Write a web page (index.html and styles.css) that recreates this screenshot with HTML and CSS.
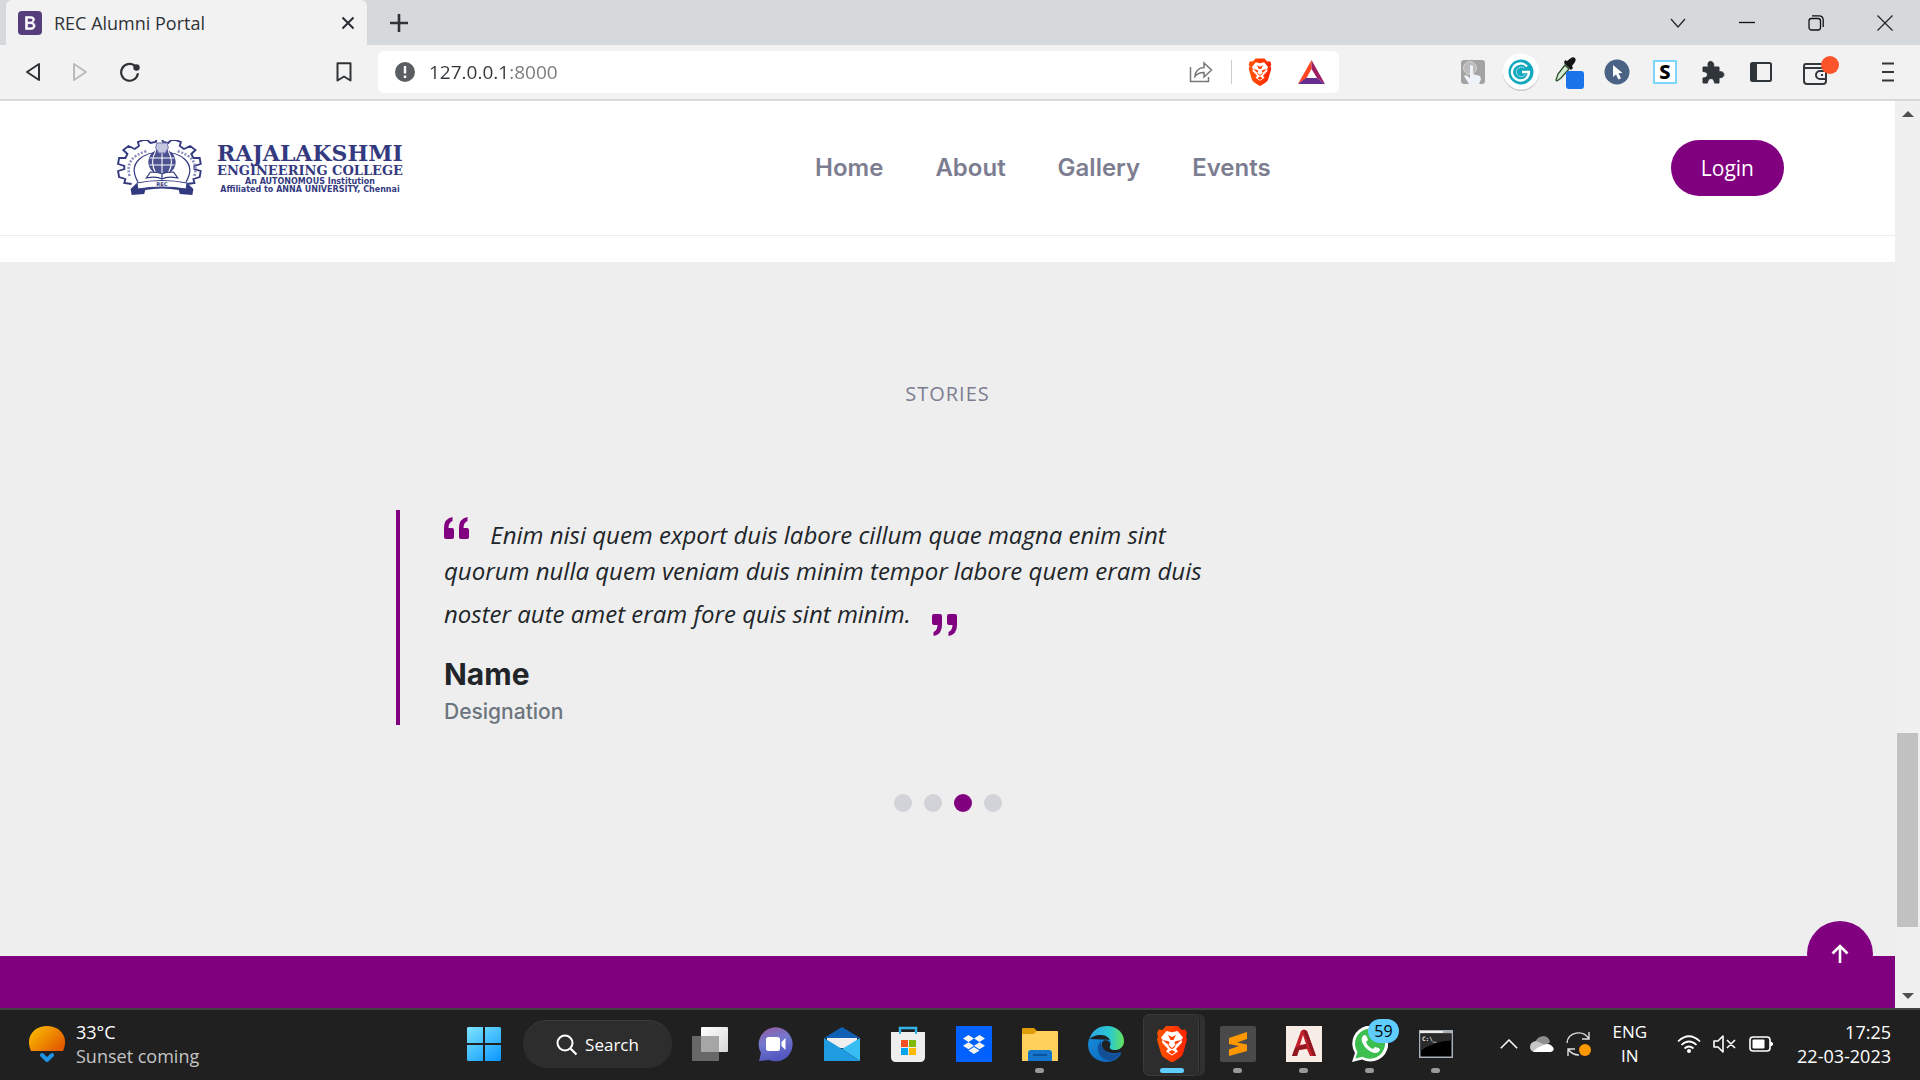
FILE: index.html
```html
<!DOCTYPE html>
<html lang="en">
<head>
<meta charset="utf-8">
<title>REC Alumni Portal</title>
<link rel="stylesheet" href="styles.css">
</head>
<body>
<div class="tabstrip">
  <div class="tab">
    <svg class="favicon" viewBox="0 0 24 24" width="24" height="24"><rect width="24" height="24" rx="4" fill="#563d7c"/><path d="M7.500 5.500h5.200c5 0 4.700 5.300 1.500 6 4 .6 4 7-1.200 7H7.500zM9.500 7.300v3.700h3c3 0 3-3.700 0-3.700zm0 5.400v4h3.200c3.400 0 3.400-4 0-4z" fill="#fff" stroke="#fff" stroke-width=".6" fill-rule="evenodd"/></svg>
    <span class="tab-title">REC Alumni Portal</span>
    <button class="bare" aria-label="Close tab"><svg width="14" height="14" viewBox="0 0 14 14"><path d="M1.500 1.500l11 11M12.500 1.500l-11 11" stroke="#2b2f33" stroke-width="2"/></svg></button>
  </div>
  <button class="bare new-tab" aria-label="New tab"><svg width="20" height="20" viewBox="0 0 20 20"><path d="M10 1v18M1 10h18" stroke="#2f3337" stroke-width="2.600"/></svg></button>
  <div class="window-controls">
    <button class="bare" aria-label="Search tabs"><svg width="16" height="16" viewBox="0 0 16 16"><path d="M1 4l7 8 7-8" fill="none" stroke="#222" stroke-width="1.200"/></svg></button>
    <button class="bare" aria-label="Minimize"><svg width="16" height="16" viewBox="0 0 16 16"><path d="M0 7.500h16" stroke="#111" stroke-width="1.300"/></svg></button>
    <button class="bare" aria-label="Restore"><svg width="16" height="16" viewBox="0 0 16 16"><rect x="1" y="3.500" width="11.500" height="11.500" rx="2.500" fill="none" stroke="#111" stroke-width="1.300"/><path d="M4 .800h7c2.500 0 4.200 1.500 4.200 4.200v7" fill="none" stroke="#111" stroke-width="1.300"/></svg></button>
    <button class="bare" aria-label="Close"><svg width="16" height="16" viewBox="0 0 16 16"><path d="M.500.500l15 15M15.500.500l-15 15" stroke="#222" stroke-width="1.200"/></svg></button>
  </div>
</div>

<div class="toolbar">
  <div class="nav-tools">
    <button class="bare" aria-label="Back"><svg width="16" height="20" viewBox="0 0 16 20"><path d="M14 2v16L2 10z" fill="none" stroke="#2f3337" stroke-width="2" stroke-linejoin="round"/></svg></button>
    <button class="bare" aria-label="Forward"><svg width="16" height="20" viewBox="0 0 16 20"><path d="M2 2v16l12-8z" fill="none" stroke="#bbb" stroke-width="2" stroke-linejoin="round"/></svg></button>
    <button class="bare" aria-label="Reload"><svg width="22" height="20" viewBox="0 0 22 20"><path d="M15.500 3.500A8.400 8.400 0 1 0 18.800 12" fill="none" stroke="#2f3337" stroke-width="2.200" stroke-linecap="round"/><circle cx="17.500" cy="5.500" r="3.200" fill="#2f3337"/></svg></button>
  </div>
  <button class="bare" aria-label="Bookmark this page"><svg width="16" height="20" viewBox="0 0 16 20"><path d="M1.500 1.200h13V18.500L8 14.500l-6.500 4z" fill="none" stroke="#2f3337" stroke-width="2" stroke-linejoin="round"/></svg></button>
  <div class="address">
    <svg width="20" height="20" viewBox="0 0 20 20"><circle cx="10" cy="10" r="10" fill="#5a5e63"/><path d="M10 4v7.500M10 13.500v2.500" stroke="#fff" stroke-width="2.400"/></svg>
    <input class="url" type="text" aria-label="Address" value="127.0.0.1:8000">
    <button class="bare" aria-label="Share"><svg width="24" height="22" viewBox="0 0 24 22"><path d="M1.500 6v14.500h18V16" fill="none" stroke="#777" stroke-width="1.500"/><path d="M6 15.500C6 10 10 6.500 15 6.500V2l7.500 7-7.500 7v-4.500c-4 0-7 1.200-9 4z" fill="none" stroke="#777" stroke-width="1.500"/></svg></button>
    <span class="divider"></span>
    <button class="bare" aria-label="Brave Shields"><svg width="24" height="28" viewBox="0 0 32 36"><use href="#lion"/></svg></button>
    <button class="bare" aria-label="Brave Rewards"><svg width="27" height="24" viewBox="0 0 27 24"><path d="M13.500 0v9l-5 9L0 24z" fill="#ff4724"/><path d="M13.500 0L27 24l-8-6-5.500-9z" fill="#9e1f63"/><path d="M0 24l8-6h11l8 6z" fill="#662d91"/></svg></button>
  </div>
  <div class="extensions">
    <button class="bare" aria-label="Click extension"><svg width="26" height="26" viewBox="0 0 26 26"><rect x="1" y="1" width="24" height="24" rx="3" fill="#a3a3a3"/><circle cx="10" cy="9" r="6.500" fill="#bbb" stroke="#d2d2d2"/><path d="M9 25l-5-8 2-1 4 3V7q1.500-2 3 0v8l7 2 1 3-2 5z" fill="#edf3f8"/></svg></button>
    <button class="bare" aria-label="Grammarly"><svg width="38" height="38" viewBox="0 0 38 38"><circle cx="19" cy="20" r="18" fill="#ccc"/><circle cx="19" cy="18.500" r="18" fill="#fff"/><circle cx="19" cy="19" r="12.500" fill="#12a8bd"/><path d="M25 13.500A8.500 8.500 0 1 0 27 19H20" fill="none" stroke="#fff" stroke-width="2.300"/><path d="M22 15a4.800 4.800 0 1 0 1.500 6" fill="none" stroke="#9be2ea" stroke-width="1"/></svg></button>
    <button class="bare" aria-label="Color picker"><svg width="32" height="34" viewBox="0 0 32 34"><path d="M12 10l4 4-8 9-4 3-1-1 2-6z" fill="#d7ead4" stroke="#28502b" stroke-width="1.300"/><path d="M11 8l7 7 2-2-1-2 3-4c2-3-1-6-4-4l-4 3-2-1z" fill="#151515"/><rect x="13" y="16" width="18" height="18" rx="3" fill="#1a73e8"/></svg></button>
    <button class="bare" aria-label="Cursor extension"><svg width="26" height="26" viewBox="0 0 26 26"><circle cx="13" cy="13" r="12.500" fill="#4a6284"/><path d="M9 6v12l3-2.500 2.500 5 2.500-1.200-2.500-5 4-.300z" fill="#fff"/></svg></button>
    <button class="bare" aria-label="S extension"><span class="s-icon">S</span></button>
    <button class="bare" aria-label="Extensions"><svg width="24" height="24" viewBox="0 0 24 24"><path d="M2 7h5.500C4.500-.500 14.500-.500 12.500 7H18v5c6.500-2 6.500 7 0 5.500V23h-4.500c0-6-7-6-7 0H2v-5c6 0 6-6.500 0-6.500z" fill="#30353a" stroke="#30353a" stroke-linejoin="round"/></svg></button>
    <button class="bare" aria-label="Sidebar"><svg width="22" height="20" viewBox="0 0 22 20"><rect x="1" y="1" width="20" height="18" rx="1.500" fill="none" stroke="#30353a" stroke-width="2"/><path d="M1 1h6v18H1z" fill="#30353a"/></svg></button>
    <button class="bare wallet" aria-label="Wallet"><svg width="38" height="32" viewBox="0 0 38 32"><path d="M24 13V9q0-1-2-1H4q-2 0-2 2v15q0 3 3 3h16q3 0 3-3v-2M2 12h22v3M24 15h-6a4 4 0 0 0 0 8h6zM19 19h2" fill="none" stroke="#33383c" stroke-width="2"/><circle cx="28" cy="9" r="9" fill="#fb542b"/></svg></button>
    <button class="bare menu" aria-label="Menu"><svg width="14" height="20" viewBox="0 0 14 20"><path d="M1 1.500h12M1 10h12M1 18.500h12" stroke="#30353a" stroke-width="2.200"/></svg></button>
  </div>
</div>

<div class="viewport">
  <div class="page">
    <header class="site-header">
      <a class="brand" href="#">
        <svg width="90" height="56" viewBox="0 0 86 56" preserveAspectRatio="none" fill="none" stroke="#343a80">
          <path d="M14 44l-7-1 1-4-6-2-1-6 6-2 0-3-6-2 1-6 6 0 2-4-4-4 5-4 6 3 4-3-1-4 8-3 4 4 5-1 1-3h5l1 3 5 1 4-4 8 3-1 4 4 3 6-3 5 4-4 4 2 4 6 0 1 6-6 2 0 3 6 2-1 6-6 2 1 4-7 1" stroke-width="1.800"/>
          <path d="M20 42C-2 2 88 2 66 42" stroke-width="1.200"/>
          <path d="M12 36Q7 17 29 11M74 36Q79 17 57 11" stroke-width="2.500" stroke-dasharray="2 1.500" stroke="#8b8fbd"/>
          <circle cx="43" cy="22" r="12.500" fill="#4d5291"/><path d="M31 18h24M31 25h24M43 10v24M37 11q-6 11 0 22M49 11q6 11 0 22" stroke="#fff" stroke-width="1"/>
          <path d="M38 3h10l1 5-3 5h-6l-3-5z" fill="#c5c7df" stroke="#7378ae"/>
          <path d="M28 38l4-6q7 0 11 2 4-2 11-2l4 6q-10-2-15 1-5-3-15-1zM43 34v5" fill="#fff" stroke-width="1.200"/>
          <path d="M13 49l5-5q25-5 50 0l5 5-1 6-12-1-1-4q-16-3-32 0l-1 4-12 1z" fill="#343a80" stroke="none"/>
          <path d="M19 43q24-5 48 0l-1 6q-23-4-46 0z" fill="#fff" stroke-width="1"/>
          <text x="43" y="46" text-anchor="middle" class="crest-text">REC</text>
        </svg>
        <span class="brand-text">
          <span class="brand-name">RAJALAKSHMI</span>
          <span class="brand-sub">ENGINEERING COLLEGE</span>
          <span class="brand-note">An AUTONOMOUS Institution</span>
          <span class="brand-note">Affiliated to ANNA UNIVERSITY, Chennai</span>
        </span>
      </a>
      <nav class="site-nav">
        <a href="#">Home</a><a href="#">About</a><a href="#">Gallery</a><a href="#">Events</a>
      </nav>
      <button class="login">Login</button>
    </header>
    <main class="stories">
      <h2 class="stories-title">Stories</h2>
      <div class="story">
        <p class="quote"><svg class="quote-open" width="25" height="22" viewBox="0 0 25 22"><path id="q" d="M8.500 0v4C6 5 4.500 7.500 4.500 11H8q2 0 2 2v7q0 2-2 2H2q-2 0-2-2V11Q0 1.500 8.500 0z"/><use href="#q" x="15"/></svg> Enim nisi quem export duis labore cillum quae magna enim sint quorum nulla quem veniam duis minim tempor labore quem eram duis noster aute amet eram fore quis sint minim. <svg class="quote-close" width="25" height="22" viewBox="0 0 25 22"><path id="r" d="M1.500 22v-4C4 17 5.500 14.500 5.500 11H2Q0 11 0 9V2Q0 0 2 0h6q2 0 2 2v9q0 9.500-8.500 11z"/><use href="#r" x="15"/></svg></p>
        <h3 class="story-name">Name</h3>
        <h4 class="story-role">Designation</h4>
      </div>
      <div class="dots">
        <button class="dot" aria-label="Story 1"></button><button class="dot" aria-label="Story 2"></button><button class="dot dot-active" aria-label="Story 3"></button><button class="dot" aria-label="Story 4"></button>
      </div>
    </main>
    <footer class="site-footer">
      <a class="to-top" href="#" aria-label="Back to top"><svg width="18" height="20" viewBox="0 0 18 20"><path d="M9 19V2M1.500 9.500L9 2l7.500 7.500" fill="none" stroke="#fff" stroke-width="2.600"/></svg></a>
    </footer>
  </div>
  <div class="scrollbar">
    <svg class="arrow" width="12" height="6" viewBox="0 0 12 6"><path d="M6 0l6 6H0z" fill="#505050"/></svg>
    <div class="track"><span class="thumb"></span></div>
    <svg class="arrow" width="12" height="6" viewBox="0 0 12 6"><path d="M0 0h12L6 6z" fill="#505050"/></svg>
  </div>
</div>

<div class="taskbar">
  <div class="weather">
    <svg width="38" height="38" viewBox="0 0 38 38"><defs><linearGradient id="sun" x2="1" y2=".7"><stop stop-color="#ffc400"/><stop offset="1" stop-color="#e35c00"/></linearGradient></defs><path d="M3 26C-4 10 8 1 19 1s23 9 16 25z" fill="url(#sun)"/><path d="M14 30l5 5 5-5" fill="none" stroke="#1c93e3" stroke-width="4" stroke-linecap="round" stroke-linejoin="round"/></svg>
    <div><div class="temp">33°C</div><div class="forecast">Sunset coming</div></div>
  </div>
  <div class="apps">
    <button class="app" aria-label="Start"><svg width="36" height="36" viewBox="0 0 36 36"><defs><linearGradient id="win" gradientUnits="userSpaceOnUse" x1="4" y1="0" x2="32" y2="36"><stop stop-color="#7be3ff"/><stop offset="1" stop-color="#0c98ff"/></linearGradient></defs><path d="M2 1h15v16H1V2zM19 1h15l1 1v15H19zM1 19h16v16H2l-1-1zM19 19h16v15l-1 1H19z" fill="url(#win)"/></svg></button>
    <button class="search"><svg width="22" height="22" viewBox="0 0 22 22"><circle cx="9" cy="9" r="7.500" fill="none" stroke="#fff" stroke-width="2"/><path d="M14.500 14.500l6 6" stroke="#fff" stroke-width="2.200"/></svg>Search</button>
    <button class="app" aria-label="Task view"><svg width="36" height="36" viewBox="0 0 36 36"><defs><linearGradient id="tv" x2="1" y2="1"><stop stop-color="#fff"/><stop offset="1" stop-color="#d8d8d8"/></linearGradient></defs><rect x="9" y="1" width="27" height="25" rx="1" fill="url(#tv)"/><rect y="10" width="27" height="25" rx="1" fill="#686868"/><path d="M9 10h18v16H9z" fill="#a6a6a6"/></svg></button>
    <button class="app" aria-label="Chat"><svg width="36" height="36" viewBox="0 0 36 36"><defs><linearGradient id="chat" x1=".3" x2=".6" y2="1"><stop stop-color="#9060a8"/><stop offset=".4" stop-color="#7378cf"/><stop offset="1" stop-color="#4e52bd"/></linearGradient></defs><path d="M1 35l2-8a17 17 0 1 1 8 7z" fill="url(#chat)"/><rect x="8" y="11" width="14" height="14" rx="2.500" fill="#fff"/><path d="M23.500 16l4-4v12l-4-4z" fill="#fff"/></svg></button>
    <button class="app" aria-label="Mail"><svg width="36" height="36" viewBox="0 0 36 36"><path d="M0 12L18 1l18 11z" fill="#0f60b4"/><path d="M3 12h30v10H3z" fill="#efefef"/><path d="M36 12v23L18 23z" fill="#38bdf3"/><path d="M0 12v23h36L18 23z" fill="#1f9be2"/></svg></button>
    <button class="app" aria-label="Microsoft Store"><svg width="36" height="36" viewBox="0 0 36 36"><path d="M10 9V2h16v7" fill="none" stroke="#34b2ec" stroke-width="2.500"/><path d="M1 6h34v25q0 5-5 5H6q-5 0-5-5z" fill="#eee"/><path d="M10 8V3M26 8V3" stroke="#34b2ec" stroke-width="2"/><path d="M11 14h7v7h-7z" fill="#f25022"/><path d="M19 14h7v7h-7z" fill="#7fba00"/><path d="M11 22h7v7h-7z" fill="#00a4ef"/><path d="M19 22h7v7h-7z" fill="#ffb900"/></svg></button>
    <button class="app" aria-label="Dropbox"><svg width="36" height="36" viewBox="0 0 36 36"><path d="M0 0h36v36H0z" fill="#0061fe"/><path d="M12.500 9l5.500 3.500-5.500 3.500L7 12.500zM23.500 9l5.500 3.500-5.500 3.500-5.500-3.500zM12.500 16.300l5.500 3.500-5.500 3.500L7 19.800zM23.500 16.300l5.500 3.500-5.500 3.500-5.500-3.500zM18 21l5.500 3.500L18 28l-5.500-3.500z" fill="#f7f5f2"/></svg></button>
    <button class="app running" aria-label="File Explorer"><svg width="36" height="36" viewBox="0 0 36 36"><path d="M0 3q0-1 1-1h11l3 3v8H0z" fill="#df9d09"/><path d="M0 8h12l3-3h20q1 0 1 1v29H0z" fill="#ffd05c"/><path d="M6 35v-8q0-3 3-3h18q3 0 3 3v8z" fill="#1376cb"/><path d="M11 29h14" stroke="#08498c" stroke-width="1.500"/></svg></button>
    <button class="app" aria-label="Edge"><svg width="36" height="36" viewBox="0 0 36 36"><defs><linearGradient id="e1" x2="1"><stop stop-color="#2aa5ea"/><stop offset=".6" stop-color="#2bc9cf"/><stop offset="1" stop-color="#66e25c"/></linearGradient><linearGradient id="e2" x2="1" y2="1"><stop stop-color="#1689d8"/><stop offset="1" stop-color="#0a63b8"/></linearGradient></defs><path d="M1 13C-3 25 6 36 18 36c7 0 12-3 15-8l-6-14z" fill="url(#e2)"/><path d="M1 14C4 4 11 0 19 0c10 0 17 7 17 15 0 7-5 9-9 9-5 0-6-2-5-4 3-5-2-11-9-11-6 0-10 2-12 5z" fill="url(#e1)"/><path d="M13 15c-8 8 0 22 12 19 4-2 7-5 8-8-9 5-20 0-20-11z" fill="#124f96"/><path d="M15 15c-3 4 0 11 8 12 6 1 9-1 11-2l1-5c-3 4-6 4-8 4-5 0-6-2-5-4 2-4-4-7-7-5z" fill="#202020"/></svg></button>
    <button class="app running current" aria-label="Brave"><svg width="32" height="36" viewBox="0 0 32 36"><defs><linearGradient id="lg"><stop stop-color="#ff5500"/><stop offset="1" stop-color="#ff2300"/></linearGradient></defs><g id="lion"><path d="M10 0h12l3.500 4 4-.500 1.500 4-1 3 1 3-4 14q-.500 2-3 4l-6 4q-2 1.500-4 0l-6-4q-2.500-2-3-4L1 13.500l1-3-1-3 1.500-4 4 .500z" fill="url(#lg)"/><path d="M10.500 5l5.500 1.200L21.500 5l5.500 6.500-1.500 2 .500 3-6 6.500 2 2.500-6 4-6-4 2-2.500-6-6.500.500-3-1.500-2z" fill="#fff"/><path d="M6.500 14l6 1.200 1 1.500-1 2.300 3.500 3 3.500-3-1-2.300 1-1.500 6-1.200-5.500 4.500-1 2.500-3 2.200-3-2.200-1-2.500zM12.500 26l3.500-2 3.500 2-3.500 2.500zM12 9l4 2 4-2-2.500 5h-3z" fill="#ff4000"/></g></svg></button>
    <button class="app running" aria-label="Sublime Text"><svg width="36" height="36" viewBox="0 0 36 36"><rect width="36" height="36" rx="2" fill="#4a4a4a"/><path d="M9 12l18-6v7l-10 3.500 10 2v6.500L9 30v-6.500l10-3.500-10-2z" fill="#ff9800"/></svg></button>
    <button class="app running" aria-label="AutoCAD"><svg width="36" height="36" viewBox="0 0 36 36"><path d="M0 0h36v36H0z" fill="#f8ece7"/><path d="M6 30L15 5q3-3 6 0l9 25h-6l-3-7-8 1-2 6zM14 19l6-1-3-9z" fill="#c21f2b" fill-rule="evenodd"/><path d="M6 30l3-8 11-4 1 4-8 2-2 6zM17 4l4 1 9 25h-3z" fill="#8f1720"/></svg></button>
    <button class="app running" aria-label="WhatsApp, 59 unread"><svg width="36" height="36" viewBox="0 0 36 36"><path d="M0 36l3-9A18 18 0 1 1 10 33.500z" fill="#fff"/><path d="M3.500 32.500l2-6.500a15 15 0 1 1 5 4.700z" fill="#3dbf50"/><path d="M12 9c-5 4-1 10 3 14s11 6 13 1c0-1 0-2-5-3l-2 2c-3-1-6-4-7-7l2-2c-1-4-2-5-4-5z" fill="#fff"/></svg><span class="badge">59</span></button>
    <button class="app running" aria-label="Command Prompt"><svg width="34" height="28" viewBox="0 0 34 28"><path d="M0 0h34v28H0z" fill="#a8b0b8"/><path d="M1.500 3.500h31v23h-31z" fill="#000"/><path d="M1.500 3.500h31v7Q15 11 1.500 21z" fill="#2b2b2b"/><path d="M1 1h23v2H1z" fill="#eee"/><text x="3" y="11" class="prompt">C:\_</text></svg></button>
  </div>
  <div class="tray">
    <svg width="18" height="10" viewBox="0 0 18 10"><path d="M.800 9.200L9 1l8.200 8.200" fill="none" stroke="#fff" stroke-width="1.500"/></svg>
    <svg width="24" height="16" viewBox="0 0 24 16"><path d="M5 6q3-6 9-6 5 1 6 6l-7 6z" fill="#8e8e8e"/><path d="M4 16q-4-1-4-5 0-5 6-6l12 5-6 6z" fill="#c6c6c6"/><path d="M3 16q4-5 9-6 6-4 10 0 4 4-1 6z" fill="#fff"/></svg>
    <svg width="26" height="26" viewBox="0 0 26 26"><path d="M1 12C2 1 17-2 23 8M23 1v7h-7M2 25v-7h7M2 18q4 6 11 6" fill="none" stroke="#ddd" stroke-width="1.400"/><circle cx="19" cy="19" r="6" fill="#ff9800"/></svg>
    <div class="lang">ENG<br>IN</div>
    <svg width="24" height="18" viewBox="0 0 24 18"><path d="M1 6.500q11-10.500 22 0M4.500 10q7.500-7 15 0M7.500 13.500q4.500-4 9 0" fill="none" stroke="#fff" stroke-width="1.700"/><circle cx="12" cy="16" r="2" fill="#fff"/></svg>
    <svg width="24" height="18" viewBox="0 0 24 18"><path d="M1 6h4l5-5v16l-5-5H1zM14 5l8 8M22 5l-8 8" fill="none" stroke="#fff" stroke-width="1.600" stroke-linejoin="round"/></svg>
    <svg width="24" height="16" viewBox="0 0 24 16"><rect x="1" y="1" width="20" height="14" rx="3" fill="none" stroke="#fff" stroke-width="1.600"/><rect x="3.500" y="3.500" width="12" height="9" rx="1" fill="#fff"/><path d="M21 5l3 2v2l-3 2z" fill="#fff"/></svg>
    <div class="clock">17:25<br>22-03-2023</div>
  </div>
</div>
</body>
</html>
```
FILE: styles.css
```css
* { box-sizing: border-box; }
body {
  margin: 0;
  min-height: 100vh;
  display: flex;
  flex-direction: column;
  font-family: "Open Sans", "Noto Sans", sans-serif;
  background: #fff;
}
svg { display: block; flex: none; }
button { font-family: inherit; }
.bare {
  display: flex;
  align-items: center;
  justify-content: center;
  flex: none;
  padding: 0;
  border: 0;
  background: none;
}

/* browser frame */
.tabstrip {
  display: flex;
  align-items: center;
  height: 45px;
  padding-left: 6px;
  background: #d5d9dc;
}
.tab {
  display: flex;
  align-items: center;
  gap: 12px;
  width: 361px;
  height: 45px;
  padding: 0 12px;
  border-radius: 6px 6px 0 0;
  background: #f2f2f2;
}
.tab-title { flex: 1; font-size: 18px; line-height: 24px; color: #2f3337; }
.new-tab { margin-left: 22px; }
.window-controls {
  display: flex;
  gap: 53px;
  margin-left: auto;
  padding-right: 27px;
}
.toolbar {
  display: flex;
  align-items: center;
  height: 56px;
  border-bottom: 2px solid #d5d9dc;
  background: #f2f2f2;
  padding: 0 23px 0 25px;
}
.nav-tools { display: flex; gap: 31px; margin-right: 195px; }
.address {
  display: flex;
  align-items: center;
  flex: 1;
  gap: 16px;
  height: 42px;
  margin-left: 26px;
  padding: 0 12px 0 17px;
  border-radius: 6px;
  background: #fff;
}
.url {
  flex: 1;
  min-width: 0;
  padding: 0;
  margin-left: -2px;
  border: 0;
  outline: 0;
  font: 19px "Open Sans", "Noto Sans", sans-serif;
  color: transparent;
  background: linear-gradient(90deg, #33373b 81px, #77797c 81px);
  -webkit-background-clip: text;
  background-clip: text;
}
.divider { width: 1px; height: 24px; background: #ccc; }
.address .bare { margin-right: 2px; }
.address .bare:nth-last-child(2) { margin-right: 10px; }
.extensions { display: flex; align-items: center; gap: 20px; margin-left: 120px; }
.extensions .bare { width: 28px; }
.s-icon {
  width: 24px;
  height: 24px;
  border: 2px solid #7fd4fa;
  background: #fff;
  text-align: center;
  color: #000;
  font: 800 20px/20px "Noto Sans", sans-serif;
}
.extensions .wallet { margin-left: 12px; }
.extensions .menu { margin-left: 24px; width: 18px; }

/* page */
.viewport { flex: 1; display: flex; }
.page { flex: 1; display: flex; flex-direction: column; min-width: 0; }
.site-header {
  display: flex;
  justify-content: space-between;
  align-items: center;
  padding: 39px 111px 39px 117px;
  border-bottom: 1px solid #ececec;
  margin-bottom: 26px;
}
.brand { display: flex; gap: 10px; padding-right: 12px; color: #343a80; text-decoration: none; }
.brand-text {
  display: flex;
  flex-direction: column;
  align-items: center;
  padding-top: 2px;
  white-space: nowrap;
}
.brand-name { font: bold 22px/22px "DejaVu Serif", serif; }
.brand-sub { font: bold 13px/14px "DejaVu Serif", serif; }
.brand-note { font: bold 8px/8px "DejaVu Sans", sans-serif; }
.crest-text { font: bold 5px "DejaVu Sans", sans-serif; fill: #343a80; stroke: none; }
.site-nav { display: flex; gap: 52px; }
.site-nav a {
  font: 600 24px/36px Inter, sans-serif;
  color: #7d7d91;
  text-decoration: none;
}
.login {
  padding: 10px 30px;
  border: 0;
  border-radius: 28px;
  background: #800080;
  color: #fff;
  font-size: 21px;
  line-height: 36px;
}
.stories { background: #eee; padding: 117px 0 144px; }
.stories-title {
  margin: 0 0 101px;
  font-size: 20px;
  font-weight: 400;
  line-height: 30px;
  letter-spacing: 1px;
  text-align: center;
  text-transform: uppercase;
  color: #7d7d91;
}
.story {
  max-width: 1103px;
  margin: 0 auto;
  padding-left: 44px;
  border-left: 4px solid #800080;
}
.quote {
  max-width: 790px;
  margin: 0;
  font-size: 24px;
  line-height: 36px;
  font-style: italic;
  color: #212529;
}
.quote svg { display: inline; fill: #800080; }
.quote-open { margin: 7px 15px 0 0; vertical-align: 5px; }
.quote-close { margin: 25px 0 0 15px; vertical-align: -13px; }
.story-name {
  margin: 20px 0 0;
  font: 700 30px/36px Inter, sans-serif;
  color: #212529;
}
.story-role {
  margin: 6px 0 0;
  font: 500 21px/27px Inter, sans-serif;
  color: #6c757d;
}
.dots { display: flex; justify-content: center; gap: 12px; margin-top: 69px; }
.dot { width: 18px; height: 18px; padding: 0; border: 0; border-radius: 50%; background: #d2d2d9; }
.dot-active { background: #800080; }
.site-footer { position: relative; flex: 1; min-height: 52px; background: #800080; }
.to-top {
  position: absolute;
  right: 22px;
  top: -35px;
  display: grid;
  place-items: center;
  width: 66px;
  height: 66px;
  border-radius: 50%;
  background: #800080;
}
.scrollbar {
  display: flex;
  flex-direction: column;
  align-items: center;
  width: 25px;
  padding: 10px 0 9px;
  background: #f0f0f0;
}
.track { flex: 1; display: flex; flex-direction: column; padding: 8px 0; }
.track::before { content: ""; flex: 607; }
.thumb { flex: 193; width: 21px; background: #c1c1c1; }
.track::after { content: ""; flex: 58; }

/* taskbar */
.taskbar {
  display: grid;
  grid-template-columns: 1fr auto 1fr;
  align-items: center;
  height: 72px;
  padding-bottom: 2px;
  border-top: 2px solid #424242;
  background: #202020;
  color: #fff;
  font-size: 17px;
  line-height: 24px;
}
.weather { display: flex; align-items: center; gap: 10px; padding-left: 28px; font-size: 18px; }
.forecast { color: #c4c4c4; }
.apps { display: flex; align-items: center; }
.app {
  position: relative;
  display: grid;
  place-items: center;
  width: 66px;
  height: 60px;
  padding: 0;
  border: 0;
  background: none;
}
.running::after {
  content: "";
  position: absolute;
  bottom: 1px;
  left: 28px;
  width: 9px;
  height: 5px;
  border-radius: 3px;
  background: #999;
}
.current::before {
  content: "";
  position: absolute;
  left: 4px;
  top: 0;
  width: 54px;
  height: 60px;
  border: 1px solid #3a3a3a;
  border-radius: 6px;
  background: #2d2d2d;
  box-shadow: 1px 0 0 #202020, 6px 0 0 #303030;
}
.current svg { position: relative; }
.current::after { left: 21px; width: 24px; background: #60cdff; }
.badge {
  position: absolute;
  right: 4px;
  top: 5px;
  width: 31px;
  border-radius: 12px;
  background: #60cdff;
  color: #000;
  font-size: 16px;
  line-height: 24px;
}
.search {
  display: flex;
  align-items: center;
  justify-content: center;
  gap: 7px;
  width: 149px;
  height: 48px;
  margin: 0 5px 0 6px;
  padding: 0;
  border: 0;
  border-top: 1px solid #3c3c3c;
  border-radius: 24px;
  background: #2d2d2d;
  color: #fff;
  font-size: 17px;
}
.prompt { font: bold 6px "DejaVu Sans Mono", monospace; fill: #eee; }
.tray { display: flex; align-items: center; justify-content: flex-end; gap: 12px; padding-right: 29px; }
.lang { margin: 0 18px 0 8px; text-align: center; }
.clock { margin-left: 12px; text-align: right; font-size: 18px; }
```
